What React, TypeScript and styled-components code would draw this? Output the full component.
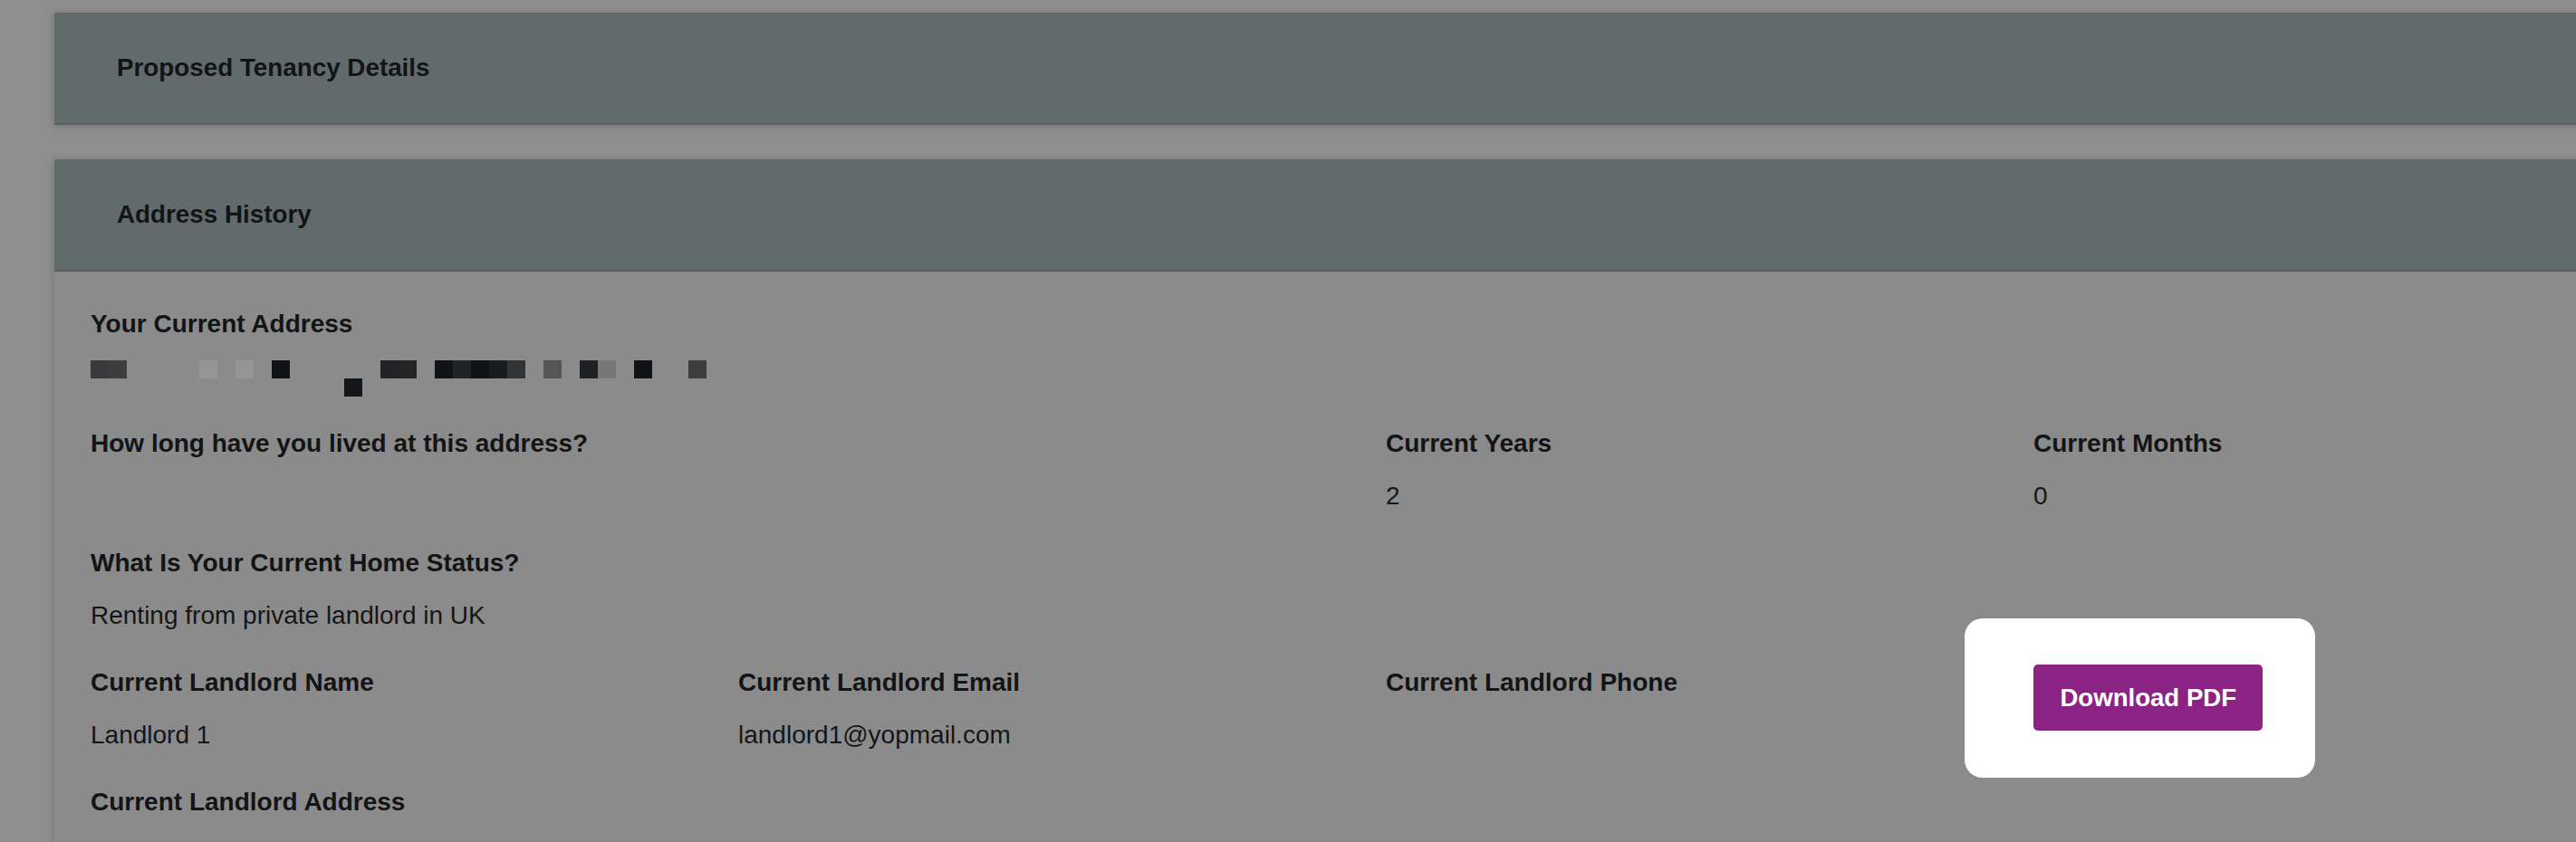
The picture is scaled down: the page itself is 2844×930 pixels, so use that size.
import React from 'react';
import styled, { createGlobalStyle } from 'styled-components';

const GlobalStyle = createGlobalStyle`
  html, body {
    margin: 0;
    padding: 0;
    background: #8e8e8e;
    overflow: hidden;
  }
  body {
    font-family: "Liberation Sans", Arial, Helvetica, sans-serif;
    color: #141517;
  }
`;

const Page = styled.main`
  display: flex;
  flex-direction: column;
  gap: 38px;
  padding: 14px 0 0 60px;
  width: 3040px;
  height: 930px;
  box-sizing: border-box;
`;

const Card = styled.section`
  background: #8b8b8b;
  box-shadow: 0 1px 8px rgba(0, 0, 0, 0.2);
`;

const CardHeader = styled.header`
  background: #626b6c;
  border-bottom: 2px solid #576060;
  padding: 41px 69px;
`;

const CardTitle = styled.h2`
  margin: 0;
  font-size: 27.8px;
  line-height: 40px;
  font-weight: 700;
  color: #131416;
`;

const CardBody = styled.div`
  padding: 38px 40px 60px;
`;

const FieldGrid = styled.div`
  display: grid;
  grid-template-columns: repeat(4, 715px);
  row-gap: 34px;
`;

const Field = styled.div<{ $span?: number }>`
  grid-column: span ${(p) => p.$span ?? 1};
  display: flex;
  flex-direction: column;
  gap: 18px;
  min-width: 0;
`;

const Label = styled.div`
  font-size: 28px;
  line-height: 40px;
  font-weight: 700;
  color: #131416;
`;

const Value = styled.div`
  font-size: 28px;
  line-height: 40px;
  min-height: 40px;
  font-weight: 400;
  color: #151618;
`;

const Mosaic = styled.svg`
  display: block;
  overflow: visible;
`;

const Spotlight = styled.div`
  position: relative;
  align-self: start;
  justify-self: start;
`;

const SpotlightGlow = styled.span`
  position: absolute;
  inset: -51px -58px -52px -76px;
  background: #ffffff;
  border-radius: 20px;
  z-index: 0;
`;

const DownloadButton = styled.button`
  position: relative;
  z-index: 1;
  height: 73px;
  padding: 0 29.4px;
  border: none;
  border-radius: 5px;
  background: #8a2384;
  color: #ffffff;
  font-family: "Liberation Sans", Arial, Helvetica, sans-serif;
  font-size: 27.6px;
  font-weight: 700;
  line-height: 73px;
  cursor: pointer;
`;

type Block = { x: number; row: number; c: string };

const blocks: Block[] = [
  { x: 0, row: 0, c: '#3a3a3d' },
  { x: 20, row: 0, c: '#3e3e41' },
  { x: 120, row: 0, c: '#959595' },
  { x: 160, row: 0, c: '#959595' },
  { x: 200, row: 0, c: '#121315' },
  { x: 280, row: 1, c: '#131718' },
  { x: 320, row: 0, c: '#222326' },
  { x: 340, row: 0, c: '#242527' },
  { x: 380, row: 0, c: '#121315' },
  { x: 400, row: 0, c: '#232426' },
  { x: 420, row: 0, c: '#101113' },
  { x: 440, row: 0, c: '#1b1c1e' },
  { x: 460, row: 0, c: '#333436' },
  { x: 500, row: 0, c: '#555555' },
  { x: 540, row: 0, c: '#1f2022' },
  { x: 560, row: 0, c: '#777777' },
  { x: 600, row: 0, c: '#111214' },
  { x: 660, row: 0, c: '#3e3e41' },
];

function RedactedAddress() {
  return (
    <Mosaic width={680} height={40} viewBox="0 0 680 40" aria-label="Redacted address">
      {blocks.map((b, i) => (
        <rect key={i} x={b.x} y={2 + b.row * 20} width={20} height={20} fill={b.c} />
      ))}
    </Mosaic>
  );
}

export default function App() {
  return (
    <>
      <GlobalStyle />
      <Page>
        <Card>
          <CardHeader>
            <CardTitle>Proposed Tenancy Details</CardTitle>
          </CardHeader>
        </Card>
        <Card>
          <CardHeader>
            <CardTitle>Address History</CardTitle>
          </CardHeader>
          <CardBody>
            <FieldGrid>
              <Field $span={4}>
                <Label>Your Current Address</Label>
                <Value>
                  <RedactedAddress />
                </Value>
              </Field>

              <Field $span={2}>
                <Label>How long have you lived at this address?</Label>
              </Field>
              <Field>
                <Label>Current Years</Label>
                <Value>2</Value>
              </Field>
              <Field>
                <Label>Current Months</Label>
                <Value>0</Value>
              </Field>

              <Field $span={4}>
                <Label>What Is Your Current Home Status?</Label>
                <Value>Renting from private landlord in UK</Value>
              </Field>

              <Field>
                <Label>Current Landlord Name</Label>
                <Value>Landlord 1</Value>
              </Field>
              <Field>
                <Label>Current Landlord Email</Label>
                <Value>landlord1@yopmail.com</Value>
              </Field>
              <Field>
                <Label>Current Landlord Phone</Label>
                <Value />
              </Field>
              <Spotlight>
                <SpotlightGlow />
                <DownloadButton type="button">Download PDF</DownloadButton>
              </Spotlight>

              <Field $span={4}>
                <Label>Current Landlord Address</Label>
                <Value />
              </Field>
            </FieldGrid>
          </CardBody>
        </Card>
      </Page>
    </>
  );
}
